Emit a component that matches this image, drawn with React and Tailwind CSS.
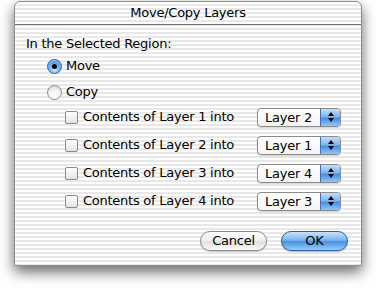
import React from "react";

const stripes =
  "bg-[repeating-linear-gradient(to_bottom,#fdfdfd_0px,#fdfdfd_2px,#e8e8e8_2px,#e8e8e8_4px)]";

const rows = [
  { from: "Layer 1", to: "Layer 2" },
  { from: "Layer 2", to: "Layer 1" },
  { from: "Layer 3", to: "Layer 4" },
  { from: "Layer 4", to: "Layer 3" },
];

function Radio({ checked, label }) {
  return (
    <div className="flex h-[20px] items-center gap-[4px]">
      {checked ? (
        <span className="flex size-[15px] items-center justify-center rounded-full border border-[#2f5fa8] bg-[radial-gradient(circle_at_50%_75%,#bfe6ff_0%,#6fb0f0_45%,#2f78d8_100%)] shadow-[inset_0_1px_1px_rgba(255,255,255,0.6)]">
          <span className="size-[5px] rounded-full bg-black" />
        </span>
      ) : (
        <span className="size-[15px] rounded-full border border-[#8c8c8c] bg-[radial-gradient(circle_at_50%_75%,#ffffff_0%,#f2f2f2_50%,#cfcfcf_100%)]" />
      )}
      <span>{label}</span>
    </div>
  );
}

function Popup({ value }) {
  return (
    <div className="flex h-[19px] w-[84px] overflow-hidden rounded-[4px] border border-[#8a8a8a] bg-[linear-gradient(to_bottom,#ffffff,#f4f4f4)] shadow-[0_1px_1px_rgba(0,0,0,0.15)]">
      <span className="flex flex-1 items-center pl-[7px] leading-none">{value}</span>
      <span className="flex w-[20px] flex-col items-center justify-center gap-[2px] border-l border-[#3f6fb8] bg-[linear-gradient(to_bottom,#c4e0fa_0%,#7fb4ec_45%,#4a8ee0_55%,#8cc8f8_100%)]">
        <span className="h-0 w-0 border-x-[3px] border-b-[4px] border-x-transparent border-b-black" />
        <span className="h-0 w-0 border-x-[3px] border-t-[4px] border-x-transparent border-t-black" />
      </span>
    </div>
  );
}

export default function App() {
  return (
    <div
      className="h-[289px] w-[376px] overflow-hidden bg-white pt-[1px] text-[13px] tracking-[-0.25px] text-black"
      style={{ fontFamily: '"DejaVu Sans", "Liberation Sans", sans-serif' }}
    >
      <div
        className={`ml-[14px] flex h-[265px] w-[348px] flex-col rounded-t-[6px] border border-[#8e8e8e] shadow-[0_6px_14px_rgba(0,0,0,0.6)] ${stripes}`}
      >
        {/* Title bar */}
        <div className="flex h-[23px] shrink-0 items-center justify-center border-b border-[#6e6e6e]">
          Move/Copy Layers
        </div>

        {/* Body */}
        <div className="flex flex-1 flex-col pl-[11px] pt-[11px]">
          <div className="h-[16px] leading-[16px]">In the Selected Region:</div>

          <div className="ml-[21px] mt-[4px] flex flex-col gap-[6px]">
            <Radio checked label="Move" />
            <Radio label="Copy" />
          </div>

          <div className="mt-[1px] flex flex-col pl-[39px] pr-[20px]">
            {rows.map((r) => (
              <div key={r.from} className="flex h-[28px] items-center">
                <span className="size-[13px] rounded-[2px] border border-[#8a8a8a] bg-[linear-gradient(to_bottom,#ffffff,#e4e4e4)]" />
                <span className="ml-[5px]">Contents of {r.from} into</span>
                <span className="ml-auto">
                  <Popup value={r.to} />
                </span>
              </div>
            ))}
          </div>

          <div className="mt-[16px] flex justify-end gap-[14px] pr-[13px]">
            <button className="flex h-[20px] w-[67px] items-center justify-center rounded-full border border-[#8a8a8a] bg-[linear-gradient(to_bottom,#ffffff_0%,#f0f0f0_45%,#e0e0e0_55%,#fafafa_100%)] shadow-[0_1px_1px_rgba(0,0,0,0.2)]">
              Cancel
            </button>
            <button className="flex h-[20px] w-[67px] items-center justify-center rounded-full border border-[#2c5ea8] bg-[linear-gradient(to_bottom,#c8e2fb_0%,#7cb3ee_45%,#4a8fe2_55%,#94d0fb_100%)] shadow-[0_1px_1px_rgba(0,0,0,0.25)]">
              OK
            </button>
          </div>
        </div>
      </div>
    </div>
  );
}
